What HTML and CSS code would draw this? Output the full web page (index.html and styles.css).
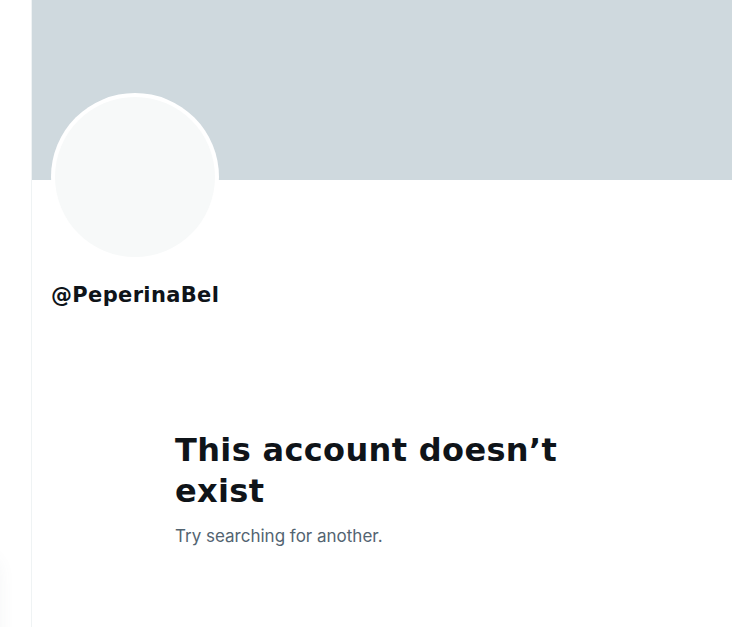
FILE: index.html
```html
<!DOCTYPE html>
<html lang="en">
<head>
<meta charset="utf-8">
<title>@PeperinaBel</title>
<link rel="stylesheet" href="styles.css">
</head>
<body>
<div class="page">
  <aside class="rail">
    <div class="rail-shadow"></div>
  </aside>
  <main class="main">
    <div class="banner"></div>
    <div class="profile">
      <div class="avatar"><div class="avatar-inner"></div></div>
      <div class="handle">@PeperinaBel</div>
    </div>
    <section class="empty">
      <h1 class="empty-title">This account doesn’t exist</h1>
      <p class="empty-sub">Try searching for another.</p>
    </section>
  </main>
</div>
</body>
</html>
```
FILE: styles.css
```css
html, body {
  margin: 0;
  padding: 0;
  background: #ffffff;
  height: 100%;
  overflow: hidden;
}
body {
  font-family: Inter, "Noto Sans", sans-serif;
  color: #0f1419;
}
.page {
  display: flex;
  height: 627px;
}
.rail {
  width: 31px;
  flex: 0 0 31px;
  border-right: 1px solid #eff3f4;
  position: relative;
  overflow: hidden;
}
.rail-shadow {
  position: absolute;
  left: -40px;
  top: 555px;
  width: 40px;
  height: 140px;
  border-radius: 20px;
  box-shadow: 0 0 16px rgba(101, 119, 134, 0.07);
  background: #ffffff;
}
.main {
  flex: 1;
  display: flex;
  flex-direction: column;
}
.banner {
  height: 180px;
  background: #cfd9de;
}
.profile {
  padding-left: 19px;
  display: flex;
  flex-direction: column;
}
.avatar {
  width: 168px;
  height: 168px;
  margin-top: -87px;
  border-radius: 50%;
  background: #ffffff;
  padding: 4px;
  box-sizing: border-box;
}
.avatar-inner {
  width: 100%;
  height: 100%;
  border-radius: 50%;
  background: #f7f9f9;
}
.handle {
  margin-top: 20px;
  font-family: "DejaVu Sans", Inter, sans-serif;
  font-size: 21px;
  font-weight: 700;
  letter-spacing: 0.35px;
  line-height: 28px;
  color: #0f1419;
}
.empty {
  margin-top: 121px;
  padding-left: 143px;
  width: 400px;
}
.empty-title {
  margin: 0;
  font-family: "DejaVu Sans", Inter, sans-serif;
  font-size: 32px;
  line-height: 41px;
  font-weight: 700;
  letter-spacing: 0.35px;
  color: #0f1419;
}
.empty-sub {
  margin: 13px 0 0;
  font-size: 17px;
  line-height: 22px;
  color: #536471;
}
```
